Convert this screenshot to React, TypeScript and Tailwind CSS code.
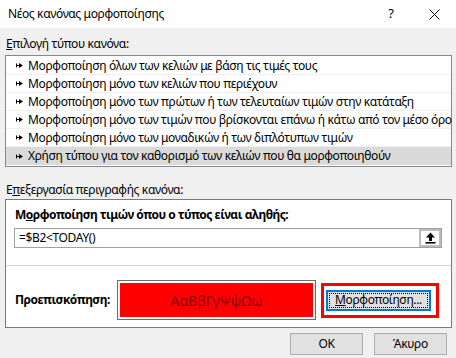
const ruleTypes = [
  'Μορφοποίηση όλων των κελιών με βάση τις τιμές τους',
  'Μορφοποίηση μόνο των κελιών που περιέχουν',
  'Μορφοποίηση μόνο των πρώτων ή των τελευταίων τιμών στην κατάταξη',
  'Μορφοποίηση μόνο των τιμών που βρίσκονται επάνω ή κάτω από τον μέσο όρο',
  'Μορφοποίηση μόνο των μοναδικών ή των διπλότυπων τιμών',
  'Χρήση τύπου για τον καθορισμό των κελιών που θα μορφοποιηθούν',
]

function RuleArrow() {
  return (
    <svg width="7" height="5" viewBox="0 0 7 5" className="shrink-0">
      <rect x="0" y="0.5" width="1" height="4" fill="#000" />
      <rect x="1" y="2" width="2.5" height="1" fill="#000" />
      <path d="M3 0 L7 2.5 L3 5 Z" fill="#000" />
    </svg>
  )
}

function CollapseIcon() {
  return (
    <svg width="11" height="12" viewBox="0 0 11 12">
      <path d="M5.5 0.5 L10 5.5 H7 V9 H4 V5.5 H1 Z" fill="#000" />
      <rect x="0.5" y="10" width="10" height="1.6" fill="#000" />
    </svg>
  )
}

export default function App() {
  return (
    <div
      className="w-[456px] h-[358px] overflow-hidden bg-[#f0f0f0] text-[12px] tracking-[-0.35px] text-black"
      style={{ fontFamily: '"Noto Sans", "Open Sans", sans-serif' }}
    >
      {/* title bar */}
      <div className="h-[28px] bg-white flex items-center pl-[8px]">
        <span className="flex-1">Νέος κανόνας μορφοποίησης</span>
        <span className="w-[20px] text-center mr-[28px] text-[13px]">?</span>
        <svg width="11" height="11" viewBox="0 0 11 11" className="mr-[16px]">
          <path d="M0.5 0.5 L10.5 10.5 M10.5 0.5 L0.5 10.5" stroke="#000" strokeWidth="1" />
        </svg>
      </div>

      <div className="pl-[5px] pr-[4px]">
        <div className="mt-[8px] leading-[16px] pl-[1px]">
          <span className="underline">Ε</span>πιλογή τύπου κανόνα:
        </div>

        <div className="mt-[3px] h-[112px] border border-[#828790] bg-white pt-[1px]">
          {ruleTypes.map((r, i) => (
            <div
              key={r}
              className={
                i === ruleTypes.length - 1
                  ? 'h-[18px] flex items-center gap-[5px] pl-[10px] bg-[#dadada] whitespace-nowrap'
                  : 'h-[18px] flex items-center gap-[5px] pl-[10px] border-b border-[#f0f0f0] whitespace-nowrap'
              }
            >
              <RuleArrow />
              <span className="leading-[16px]">{r}</span>
            </div>
          ))}
        </div>

        <div className="mt-[15px] leading-[16px] pl-[1px]">
          Ε<span className="underline">π</span>εξεργασία περιγραφής κανόνα:
        </div>

        <div className="mt-[1px] h-[129px] border border-[#7a7a7a] bg-white">
          <div className="pt-[7px] pl-[9px] font-bold tracking-[-0.5px] leading-[16px]">
            Μ<span className="underline">ο</span>ρφοποίηση τιμών όπου ο τύπος είναι αληθής:
          </div>
          <div className="mt-[5px] ml-[8px] w-[428px] h-[20px] border border-[#a0a0a0] flex items-stretch">
            <div className="flex-1 flex items-center pl-[4px]">=$B2&lt;TODAY()</div>
            <div className="w-[22px] border-[2px] border-[#bdbdbd] bg-white flex items-center justify-center">
              <CollapseIcon />
            </div>
          </div>

          <div className="mt-[17px] h-px bg-[#d4d4d4]" />

          <div className="mt-[14px] flex items-center pl-[9px]">
            <div className="w-[102px] font-bold tracking-[-0.5px]">Προεπισκόπηση:</div>
            <div className="w-[199px] h-[40px] border border-[#6d6d6d] bg-white p-[2px]">
              <div className="w-full h-full bg-[#ff0000] flex items-center justify-center text-[#8c0000] text-[14px] tracking-normal">
                ΑαΒβΓγΨψΩω
              </div>
            </div>
            <div className="ml-[5px] w-[118px] h-[35px] border-[3px] border-[#ff0000] bg-white pl-[2px] pr-[5px] pt-[4px] pb-[4px]">
              <div className="w-full h-full border-[2px] border-[#0078d7] bg-[#e1e1e1] p-[1px]">
                <div className="w-full h-full border border-dotted border-black flex items-center justify-center">
                  <span>
                    <span className="underline">Μ</span>ορφοποίηση...
                  </span>
                </div>
              </div>
            </div>
          </div>
        </div>

        <div className="mt-[5px] flex justify-end gap-[11px] pr-[5px]">
          <div className="w-[73px] h-[22px] border border-[#adadad] bg-[#e1e1e1] flex items-center justify-center">
            OK
          </div>
          <div className="w-[73px] h-[22px] border border-[#adadad] bg-[#e1e1e1] flex items-center justify-center">
            Άκυρο
          </div>
        </div>
      </div>
    </div>
  )
}
